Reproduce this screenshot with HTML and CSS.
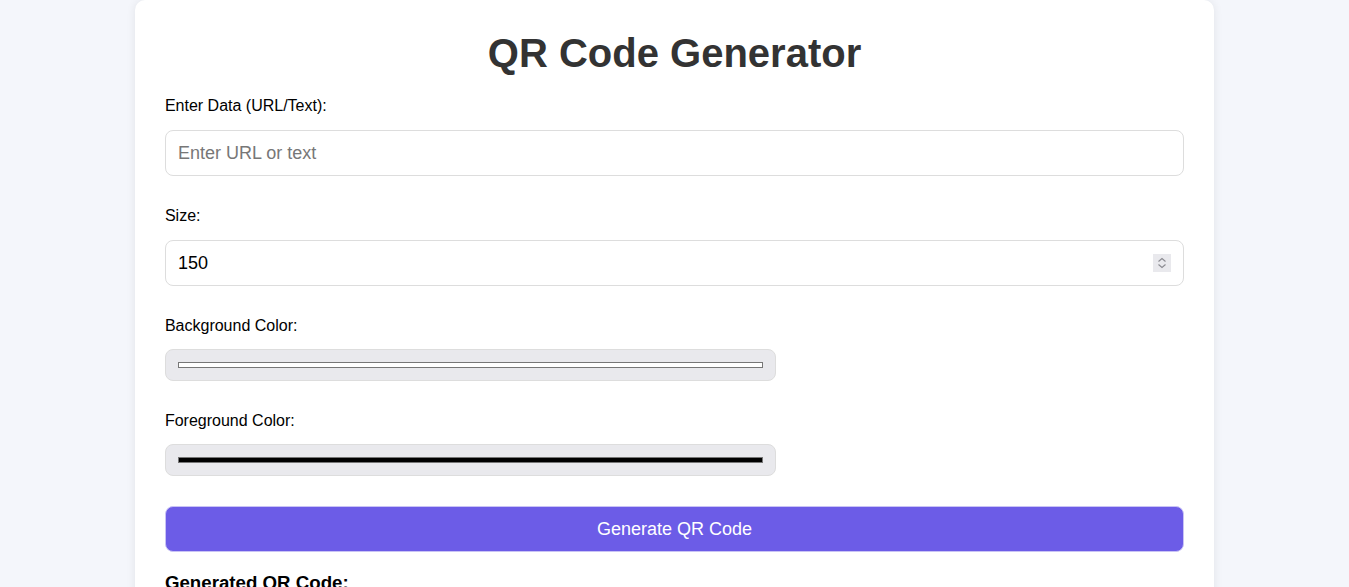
FILE: index.html
```html
<!DOCTYPE html>
<html>
<head>
<meta charset="utf-8">
<link rel="stylesheet" href="styles.css">
</head>
<body>
<div class="card">
  <h1 class="title">QR Code Generator</h1>
  <div class="field">
    <label class="label" for="data">Enter Data (URL/Text):</label>
    <input class="text-input" id="data" type="text" placeholder="Enter URL or text">
  </div>
  <div class="field">
    <label class="label" for="size">Size:</label>
    <div class="number-wrap">
      <input class="text-input number-input" id="size" type="number" value="150">
      <span class="spinner" aria-hidden="true">
        <svg width="18" height="18" viewBox="0 0 18 18">
          <path d="M5.5 7.5 L9 4.5 L12.5 7.5" fill="none" stroke="#8a8a90" stroke-width="1.1"/>
          <path d="M5.5 10.5 L9 13.5 L12.5 10.5" fill="none" stroke="#8a8a90" stroke-width="1.1"/>
        </svg>
      </span>
    </div>
  </div>
  <div class="field field-color">
    <label class="label label-color" for="bg">Background Color:</label>
    <input class="color-input" id="bg" type="color" value="#ffffff">
  </div>
  <div class="field field-color">
    <label class="label label-color" for="fg">Foreground Color:</label>
    <input class="color-input" id="fg" type="color" value="#000000">
  </div>
  <button class="btn" type="button">Generate QR Code</button>
  <h3 class="result-title">Generated QR Code:</h3>
</div>
</body>
</html>
```

FILE: styles.css
```css
html, body {
  margin: 0;
  padding: 0;
}
body {
  background: #f4f6fb;
  font-family: "Liberation Sans", Arial, sans-serif;
  color: #000;
}
.card {
  width: 80%;
  margin: 0 auto;
  box-sizing: border-box;
  background: #fff;
  border-radius: 10px;
  box-shadow: 0 0 10px rgba(0, 0, 0, 0.08);
  padding: 30px 30px 40px;
  display: flex;
  flex-direction: column;
}
.title {
  margin: 0 0 20px;
  text-align: center;
  font-size: 40px;
  line-height: 46px;
  font-weight: bold;
  color: #333;
}
.field {
  display: flex;
  flex-direction: column;
  margin-bottom: 30px;
}
.label {
  font-size: 16px;
  line-height: 18px;
  margin-top: 1px;
  margin-bottom: 15px;
}
.label-color {
  margin-bottom: 14px;
}
.text-input {
  font-family: "Liberation Sans", Arial, sans-serif;
  font-size: 18px;
  line-height: 20px;
  height: 46px;
  box-sizing: border-box;
  padding: 12px;
  border: 1px solid #ddd;
  border-radius: 8px;
  color: #000;
  outline: none;
}
.text-input::placeholder {
  color: #777;
}
.number-wrap {
  position: relative;
  display: flex;
  flex-direction: column;
}
.number-input {
  -moz-appearance: textfield;
}
.number-input::-webkit-inner-spin-button,
.number-input::-webkit-outer-spin-button {
  -webkit-appearance: none;
  margin: 0;
}
.spinner {
  position: absolute;
  right: 13px;
  top: 14px;
  width: 18px;
  height: 18px;
  background: #e9e9ed;
  display: block;
}
.spinner svg {
  display: block;
}
.color-input {
  width: 60%;
  height: 32px;
  box-sizing: border-box;
  padding: 12px;
  border: 1px solid #ddd;
  border-radius: 8px;
  background: #e9e9ed;
}
.color-input::-webkit-color-swatch-wrapper {
  padding: 0;
}
.color-input::-webkit-color-swatch {
  border: 1px solid #777;
  border-radius: 0;
}
.field-color {
  margin-bottom: 30px;
}
.btn {
  height: 46px;
  min-height: 46px;
  flex-shrink: 0;
  box-sizing: border-box;
  padding: 0 12px;
  background: #6c5ce7;
  color: #fff;
  font-family: "Liberation Sans", Arial, sans-serif;
  font-size: 18px;
  border: 1px solid #c9c3f5;
  border-radius: 8px;
  cursor: pointer;
}
.result-title {
  margin: 20px 0 0;
  font-size: 18.7px;
  font-weight: bold;
}
```
